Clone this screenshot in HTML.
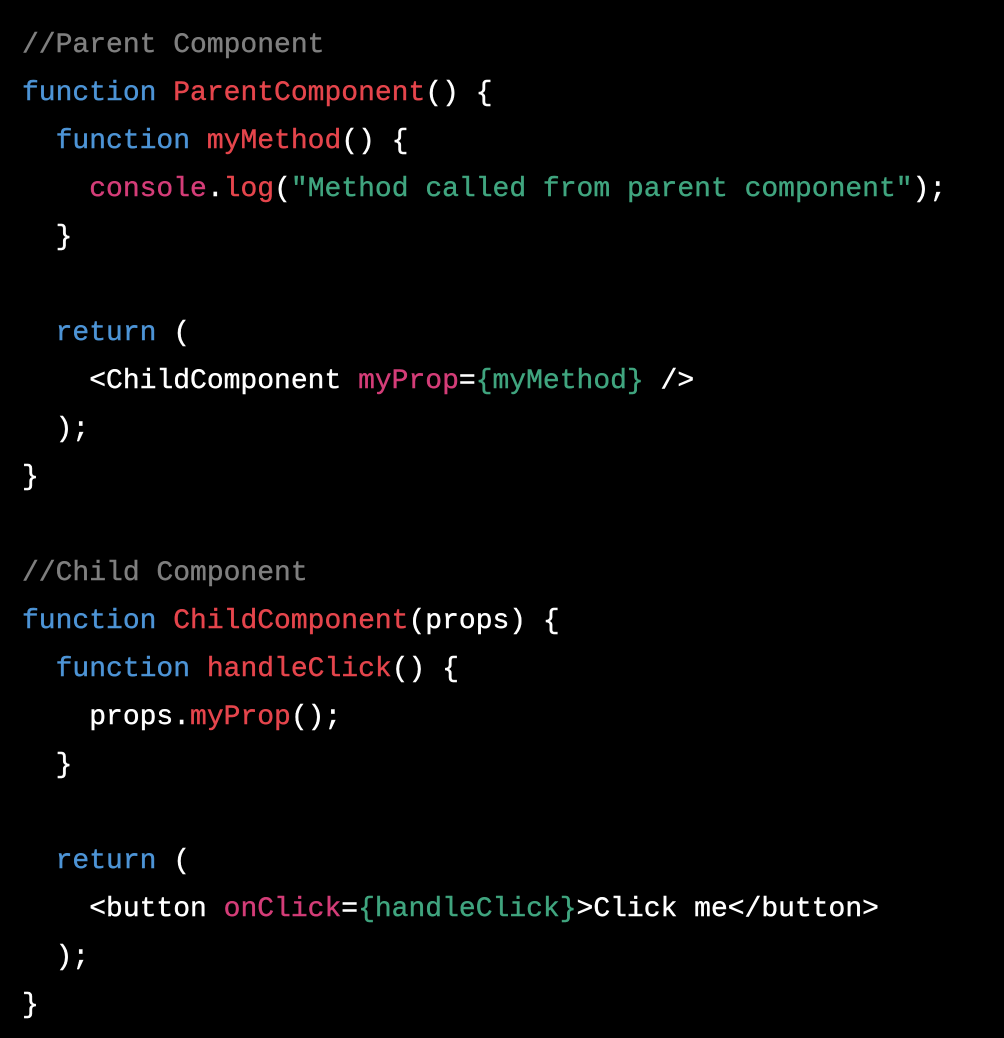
<!DOCTYPE html>
<html><head><meta charset="utf-8"><style>
html,body{margin:0;padding:0;background:#000;}
body{width:1004px;height:1038px;overflow:hidden;}
pre{margin:0;position:absolute;left:22px;top:22px;font-family:"Liberation Mono",monospace;font-size:28px;line-height:48px;color:#fff;-webkit-text-stroke:0.4px currentColor;}
.c{color:#7f7f7f}.k{color:#4d94d6}.f{color:#e5454c}.p{color:#d43d78}.s{color:#40a57f}
</style></head><body><pre><span class="c">//Parent Component</span>
<span class="k">function</span> <span class="f">ParentComponent</span>() {
  <span class="k">function</span> <span class="f">myMethod</span>() {
    <span class="p">console</span>.<span class="f">log</span>(<span class="s">"Method called from parent component"</span>);
  }

  <span class="k">return</span> (
    &lt;ChildComponent <span class="p">myProp</span>=<span class="s">{myMethod}</span> /&gt;
  );
}

<span class="c">//Child Component</span>
<span class="k">function</span> <span class="f">ChildComponent</span>(props) {
  <span class="k">function</span> <span class="f">handleClick</span>() {
    props.<span class="f">myProp</span>();
  }

  <span class="k">return</span> (
    &lt;button <span class="p">onClick</span>=<span class="s">{handleClick}</span>&gt;Click me&lt;/button&gt;
  );
}</pre></body></html>
